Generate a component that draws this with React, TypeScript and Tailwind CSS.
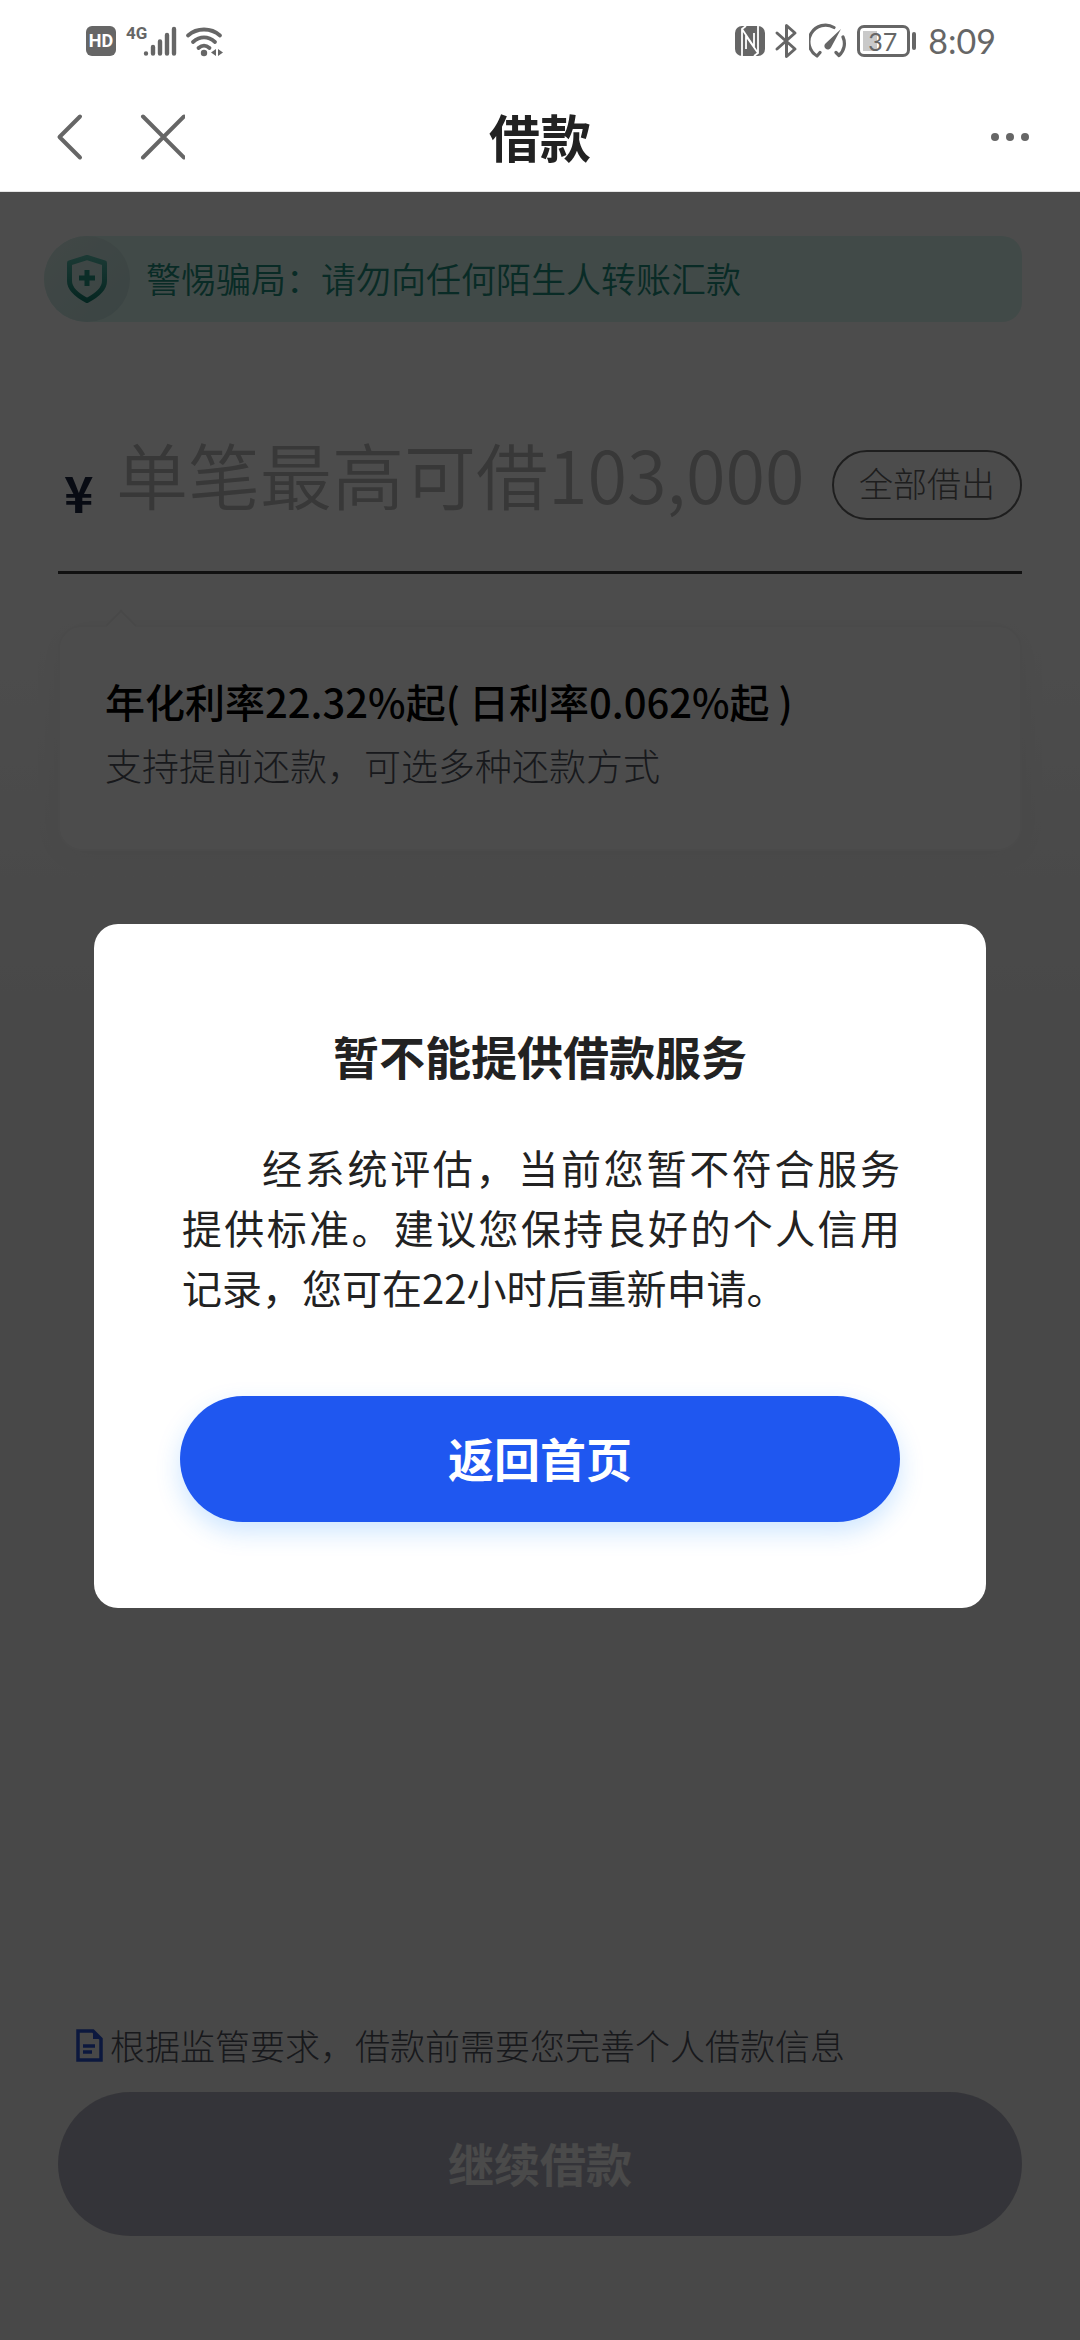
import type { ReactNode } from "react";
import clsx from "clsx";

type PillProps = {
    children: ReactNode;
    className?: string;
    disabled?: boolean;
};

const PillButton = ({ children, className, disabled }: PillProps) => (
    <button
        type="button"
        disabled={disabled}
        className={clsx("w-full rounded-full pb-1 text-[46px] leading-none font-bold", className)}
    >
        {children}
    </button>
);

const StatusBar = () => (
    <div className="flex h-20 items-center justify-between pt-0.5 pr-[84px] pl-[86px] text-[#666666]">
        <div className="flex items-center">
            <span className="flex h-[30px] w-[30px] items-center justify-center rounded-md bg-[#666666] font-['Roboto',sans-serif] text-[18px] leading-none font-bold text-white">
                HD
            </span>
            <span className="ml-2.5 self-start font-['Roboto',sans-serif] text-[17px] leading-none font-bold">4G</span>
            <svg className="-ml-1 h-8 w-[34px]" viewBox="0 0 34 32" fill="none" stroke="currentColor" strokeWidth="4.4" strokeLinecap="round" aria-hidden="true">
                <path d="M3 28.5v0M10 22v6.500M17 16.500v12M24 10v18.500M31 4v24.500" />
            </svg>
            <svg className="ml-2 h-8 w-[40px]" viewBox="0 0 40 32" fill="none" stroke="currentColor" strokeWidth="3.800" strokeLinecap="round" aria-hidden="true">
                <path d="M3 10.500c9-8 23-8 32 0M8 17c7-6 15-6 22 0M13.500 23c3.500-3 7.500-3 11 0" />
                <circle cx="19" cy="28" r="3.200" fill="currentColor" stroke="none" />
                <path d="M31 24v7l-5-3.500zM33 24v7l5-3.500z" fill="currentColor" stroke="none" />
            </svg>
        </div>
        <div className="flex items-center">
            <svg className="h-8 w-8" viewBox="0 0 32 32" aria-hidden="true">
                <rect x="1" y="1" width="30" height="30" rx="7" fill="currentColor" />
                <path d="M8 31V4l4-3M8 4l12 18V8M24 1v27l-4 3M24 28L12 11v13" fill="none" stroke="#fff" strokeWidth="1.800" />
            </svg>
            <svg className="ml-2 h-9 w-[25px]" viewBox="0 0 25 36" fill="none" stroke="currentColor" strokeWidth="3" strokeLinecap="round" strokeLinejoin="round" aria-hidden="true">
                <path d="M3 10l18 16-8.500 7.500V2.500L21 10 3 26" />
            </svg>
            <svg className="ml-2.5 h-9 w-[38px]" viewBox="0 0 38 36" fill="none" stroke="currentColor" strokeWidth="3.200" strokeLinecap="round" strokeLinejoin="round" aria-hidden="true">
                <path d="M11 29.500l-3 3.500A16 16 0 0 1 25 4.500M34 14a16 16 0 0 1-4 18.500l-3-3" />
                <path d="M32 6L22 24.500a3.500 3.500 0 1 1-5-4.500z" fill="currentColor" stroke="none" />
            </svg>
            <span className="ml-2.5 flex items-center gap-0.5">
                <span className="flex h-[32px] w-[53px] rounded-[7px] border-3 border-[#666666] p-[3px]">
                    <span className="flex w-[14px] bg-[#c9c9c9]">
                        <span className="pl-[5px] font-['Lato',sans-serif] text-[25px] leading-[20px]">37</span>
                    </span>
                </span>
                <span className="h-[18px] w-1 rounded-full bg-[#666666]" />
            </span>
            <span className="ml-3 font-['Lato',sans-serif] text-[34px] leading-none">8:09</span>
        </div>
    </div>
);

const Header = () => (
    <header className="flex h-28 items-center border-b border-[#e5e5e5] px-[49px] pt-0.5">
        <div className="flex flex-1 items-center gap-[54px] text-[#666666]">
            <button type="button" aria-label="返回">
                <svg className="h-12 w-[34px]" viewBox="0 0 34 48" fill="none" stroke="currentColor" strokeWidth="4" strokeLinecap="round" strokeLinejoin="round">
                    <path d="M31 3.500L10.500 24 31 44.500" />
                </svg>
            </button>
            <button type="button" aria-label="关闭">
                <svg className="h-12 w-12" viewBox="0 0 48 48" fill="none" stroke="currentColor" strokeWidth="4" strokeLinecap="round">
                    <path d="M6 3.500l41 41M47 3.500L6 44.500" />
                </svg>
            </button>
        </div>
        <h1 className="text-[51px] leading-none font-bold text-[#222222]">借款</h1>
        <div className="flex flex-1 justify-end text-[#666666]">
            <button type="button" aria-label="更多">
                <svg className="h-10 w-11" viewBox="0 0 44 40" fill="currentColor">
                    <circle cx="8" cy="20" r="4" />
                    <circle cx="23" cy="20" r="4" />
                    <circle cx="38" cy="20" r="4" />
                </svg>
            </button>
        </div>
    </header>
);

const FraudBanner = () => (
    <div className="-ml-3.5 flex h-[86px] items-center rounded-l-[43px] rounded-r-[20px] bg-[#dbf8f0]">
        <span className="flex h-[86px] w-[86px] items-center justify-center rounded-full bg-linear-to-br from-[#d9f0ea] to-[#c4e4e2]">
            <svg className="h-[50px] w-11" viewBox="0 0 44 50" aria-hidden="true">
                <defs>
                    <linearGradient id="shield" x1="0" y1="0" x2="0" y2="1">
                        <stop offset="0" stopColor="#5bbfae" />
                        <stop offset="1" stopColor="#148070" />
                    </linearGradient>
                </defs>
                <path d="M22 3.500L39.500 9v18c0 8-8 14.500-17.500 19.500C12.500 41.500 4.500 35 4.500 27V9z" fill="none" stroke="url(#shield)" strokeWidth="5" strokeLinejoin="round" />
                <path d="M22 16v16M14 24h16" stroke="#259684" strokeWidth="5" />
            </svg>
        </span>
        <p className="ml-4 pb-1 text-[35px] leading-none font-[350] text-[#1f9080]">警惕骗局：请勿向任何陌生人转账汇款</p>
    </div>
);

const AmountField = () => (
    <div className="mt-[94px] flex h-[158px] items-start border-b-3 border-[#3a3a3a]">
        <label htmlFor="amount" className="mt-[50px] w-[58px] pl-1.5 text-[50px] leading-none font-bold text-[#1c2740]">
            ¥
        </label>
        <input
            id="amount"
            type="text"
            inputMode="numeric"
            placeholder="单笔最高可借103,000"
            className="h-[112px] min-w-0 flex-1 bg-transparent text-[72px] font-[350] outline-none placeholder:text-[#bcbcbc]"
        />
        <button type="button" className="mt-[34px] h-[70px] w-[190px] shrink-0 rounded-full border-2 border-[#666666] pb-1 text-[34px] leading-none font-light text-[#666666]">
            全部借出
        </button>
    </div>
);

const RateCard = () => (
    <section className="relative mt-[51px] rounded-[24px] border-2 border-[#f8f8f8] bg-white px-[45px] pt-[44px] pb-[54px] shadow-[0_4px_32px_rgba(0,0,0,0.04)]">
        <span className="absolute -top-[13px] left-[50px] h-[22px] w-[22px] rotate-45 border-t-2 border-l-2 border-[#f2f2f2] bg-white" />
        <h2 className="text-[40px] leading-[60px] font-medium text-black">年化利率22.32%起( 日利率0.062%起 )</h2>
        <p className="mt-1 text-[37px] leading-[60px] font-light text-[#50545e]">支持提前还款，可选多种还款方式</p>
    </section>
);

const Footer = () => (
    <footer className="mt-auto pb-[104px]">
        <div className="mb-5 flex items-center pl-4">
            <svg className="mr-1.5 h-[34px] w-[30px]" viewBox="0 0 30 34" fill="none" stroke="#2a52d0" strokeWidth="3.500" aria-hidden="true">
                <path d="M4 2h15l8 8v21H4z" />
                <path d="M19 1v9h9z" fill="#2a52d0" stroke="none" />
                <path d="M9 17h12M9 23h9" />
            </svg>
            <p className="pb-0.5 text-[35px] leading-[50px] font-light text-[#50545e]">根据监管要求，借款前需要您完善个人借款信息</p>
        </div>
        <PillButton disabled className="h-36 bg-[#b0b0be] text-[#f8f8f8]">继续借款</PillButton>
    </footer>
);

const ServiceDialog = () => (
    <div className="absolute inset-0 flex items-center bg-black/70 px-[94px]">
        <div
            role="dialog"
            aria-modal="true"
            aria-labelledby="dialog-title"
            className="w-full rounded-[24px] bg-white px-[86px] pt-[97px] pb-[86px] text-[#222222]"
        >
            <h2 id="dialog-title" className="text-center text-[46px] leading-[68px] font-bold">暂不能提供借款服务</h2>
            <p className="mt-[48px] mb-[79px] pl-0.5 text-justify indent-[80px] text-[40px] leading-[60px]">
                经系统评估，当前您暂不符合服务提供标准。建议您保持良好的个人信用记录，您可在22小时后重新申请。
            </p>
            <PillButton className="h-[126px] bg-[#1f57f0] text-white shadow-[0_10px_24px_rgba(31,140,255,0.22)]">返回首页</PillButton>
        </div>
    </div>
);

const App = () => {
    return (
        <div lang="zh-CN" className="flex min-h-screen flex-col bg-white font-['Noto_Sans_CJK_SC',sans-serif]">
            <StatusBar />
            <Header />
            <main className="relative flex flex-1 flex-col bg-linear-to-b from-white from-20% to-[#f0f0f0] to-40% px-[58px] pt-[44px]">
                <FraudBanner />
                <AmountField />
                <RateCard />
                <Footer />
                <ServiceDialog />
            </main>
        </div>
    );
};

export default App;
